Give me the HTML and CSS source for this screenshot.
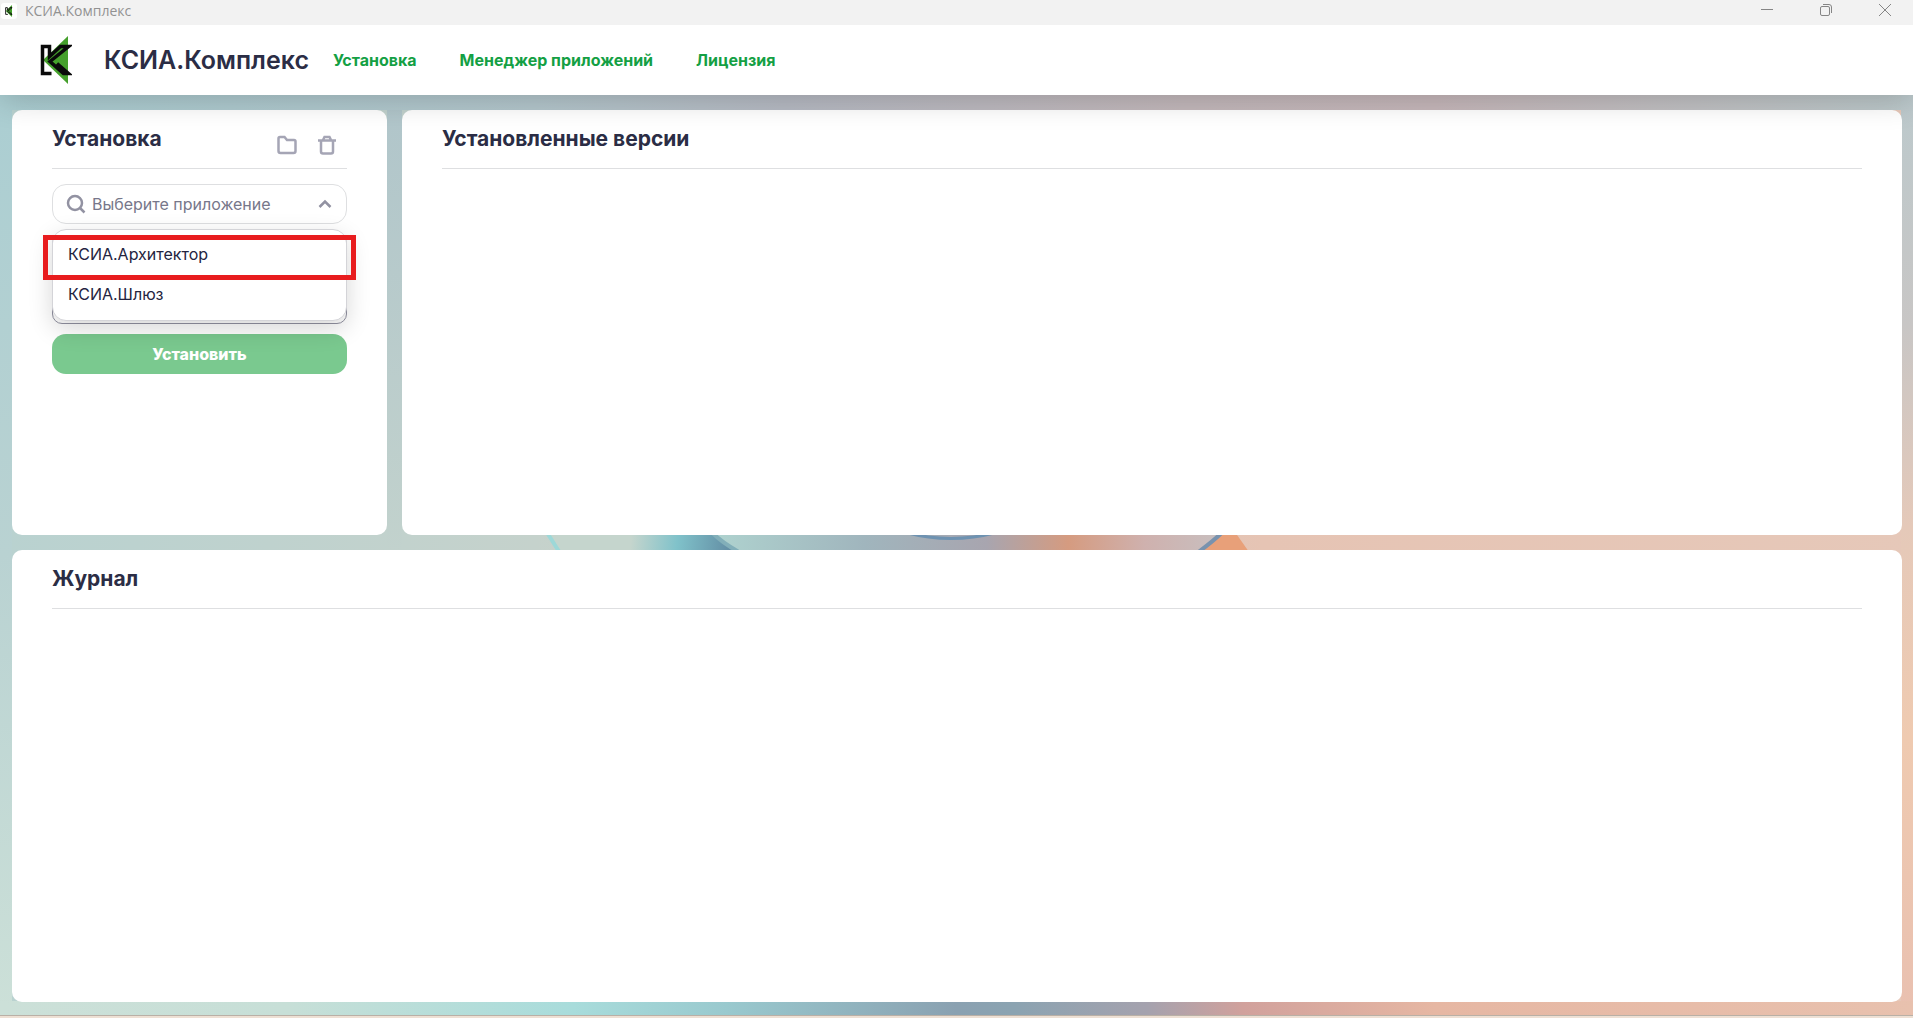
FILE: index.html
```
<!DOCTYPE html>
<html lang="ru">
<head>
    <meta charset="UTF-8">
    <meta name="viewport" content="width=device-width, initial-scale=1.0">
    <title>КСИА.Комплекс</title>
    <link rel="stylesheet" href="styles.css">
</head>
<body>
    <svg width="0" height="0" class="sprite" aria-hidden="true">
        <symbol id="logo" viewBox="0 0 32 48">
            <path d="M28 0v48L3 24z" fill="#45a02c"/>
            <path d="M11.5 37.5h-9v-27h7v10l11-10h8L10 25.5l13.500 12h5L17 27.500" fill="none" stroke="#0a0a0a" stroke-width="3.500"/>
        </symbol>
    </svg>

    <div class="titlebar">
        <span class="app-icon"><svg><use href="#logo"/></svg></span>
        <span class="window-title">КСИА.Комплекс</span>
        <div class="window-buttons">
            <button aria-label="Свернуть"><svg viewBox="0 0 12 12"><path d="M0 5.5h12"/></svg></button>
            <button aria-label="Развернуть"><svg viewBox="0 0 12 12"><rect x=".5" y="2.5" width="9" height="9" rx="1.5"/><path d="M3 .5h6a2.5 2.5 0 0 1 2.5 2.5v6"/></svg></button>
            <button aria-label="Закрыть"><svg viewBox="0 0 12 12"><path d="M0 0l12 12M12 0L0 12"/></svg></button>
        </div>
    </div>

    <header class="header">
        <svg class="logo"><use href="#logo"/></svg>
        <h1>КСИА.Комплекс</h1>
        <nav>
            <a href="#install">Установка</a>
            <a href="#manager">Менеджер приложений</a>
            <a href="#license">Лицензия</a>
        </nav>
    </header>

    <main class="content">
        <svg class="backdrop" viewBox="0 0 1913 921" preserveAspectRatio="none" aria-hidden="true">
            <defs>
                <linearGradient id="wave" gradientUnits="userSpaceOnUse" x1="548" y1="440" x2="732" y2="456">
                    <stop offset="0" stop-color="#c5d5cd"/>
                    <stop offset=".45" stop-color="#c5d5cd"/>
                    <stop offset=".7" stop-color="#80c2ca"/>
                    <stop offset="1" stop-color="#628ca3"/>
                </linearGradient>
                <linearGradient id="disc" gradientUnits="userSpaceOnUse" x1="712" y1="0" x2="1221" y2="0">
                    <stop offset="0" stop-color="#afd3cf"/>
                    <stop offset=".3" stop-color="#a0b5bd"/>
                    <stop offset=".54" stop-color="#a8a5af"/>
                    <stop offset=".7" stop-color="#d59b80"/>
                    <stop offset=".85" stop-color="#cfb1ae"/>
                    <stop offset="1" stop-color="#c8bfbf"/>
                </linearGradient>
            </defs>
            <path d="M547 439h165l26 17H558z" fill="url(#wave)"/>
            <path d="M712 439h509l-20 17H738z" fill="url(#disc)"/>
            <path d="M1221 439h15l12 17h-49z" fill="#e8a079"/>
            <path d="M547 438l12 19" stroke="#9dd8d8" stroke-width="4"/>
            <path d="M712 438q10 10 26 19" stroke="#82afb9" stroke-width="4" fill="none"/>
            <path d="M1223 437q-10 10-24 20" stroke="#7892ae" stroke-width="4" fill="none"/>
            <path d="M906 438q45 12 90 0" stroke="#6e92b1" stroke-width="3" fill="none"/>
        </svg>

        <section class="card" id="install">
            <div class="card-head">
                <h2>Установка</h2>
                <div class="tools">
                    <button aria-label="Открыть папку"><svg viewBox="0 0 20 20"><path d="M1.5 3.500a1.500 1.500 0 0 1 1.500-1.500h4.500l2.500 3h7a1.500 1.500 0 0 1 1.500 1.500v9.500a2 2 0 0 1-2 2h-13a2 2 0 0 1-2-2z"/></svg></button>
                    <button aria-label="Удалить"><svg viewBox="0 0 20 20"><path d="M1 5.500h18M4 5.500v11a2 2 0 0 0 2 2h8a2 2 0 0 0 2-2v-11M6 5l1.500-3h5L14 5"/></svg></button>
                </div>
            </div>
            <form class="install-form">
                <div class="combo">
                    <svg class="search-icon" viewBox="0 0 20 20"><circle cx="9" cy="9" r="7"/><path d="M14 14l4.500 4.500"/></svg>
                    <input type="text" placeholder="Выберите приложение" aria-label="Приложение">
                    <svg class="chevron" viewBox="0 0 14 10"><path d="M1.500 8L7 2.500 12.500 8"/></svg>
                    <div class="dropdown">
                        <button type="button" class="selected">КСИА.Архитектор</button>
                        <button type="button">КСИА.Шлюз</button>
                    </div>
                </div>
                <input class="field" type="text" aria-label="Версия">
                <input class="field" type="text" aria-label="Путь установки">
                <button class="submit" type="button">Установить</button>
            </form>
        </section>

        <section class="card">
            <div class="card-head">
                <h2>Установленные версии</h2>
            </div>
        </section>

        <section class="card journal">
            <div class="card-head">
                <h2>Журнал</h2>
            </div>
        </section>
    </main>
</body>
</html>
```
FILE: styles.css
```
:root {
    --green: #14a044;
    --text: #2b2d45;
    --icon: #a5a5b5;
    --line: #dedfe1;
}

* {
    box-sizing: border-box;
    margin: 0;
    padding: 0;
}

body {
    font-family: Inter, "Noto Sans", sans-serif;
    color: var(--text);
    min-height: 100vh;
    display: flex;
    flex-direction: column;
    background: #eee0d4;
}

button {
    font: inherit;
    border: none;
    background: none;
    cursor: pointer;
}

svg {
    display: block;
}

.sprite {
    position: absolute;
}

/* Window title bar */
.titlebar {
    position: relative;
    z-index: 2;
    height: 25px;
    display: flex;
    align-items: center;
    background: #f2f2f2;
}

.app-icon {
    width: 16px;
    height: 16px;
    margin: 0 8px 4px 1px;
    padding: 2px;
    border-radius: 3px;
    background: #fff;
}

.app-icon svg {
    width: 12px;
    height: 12px;
}

.window-title {
    font-family: "Open Sans", "Noto Sans", sans-serif;
    font-size: 14px;
    line-height: 20px;
    padding-bottom: 3px;
    color: #929292;
}

.window-buttons {
    display: flex;
    margin-left: auto;
    padding: 0 16px 5px 0;
    gap: 35px;
}

.window-buttons button {
    width: 24px;
    padding: 0 6px;
}

.window-buttons svg {
    width: 12px;
    height: 12px;
    fill: none;
    stroke: #858585;
}

/* Header */
.header {
    position: relative;
    z-index: 1;
    height: 70px;
    display: flex;
    align-items: center;
    padding-left: 40px;
    background: #fff;
    box-shadow: 0 4px 32px rgba(0, 0, 0, 0.2);
}

.logo {
    width: 32px;
    height: 48px;
    margin-right: 32px;
}

h1 {
    font-size: 25px;
    font-weight: 600;
    line-height: 32px;
}

nav {
    display: flex;
    gap: 43px;
    margin-left: 24px;
}

nav a {
    color: var(--green);
    font-size: 16px;
    font-weight: 700;
    line-height: 24px;
    text-decoration: none;
}

/* Content */
.content {
    position: relative;
    flex: 1;
    display: grid;
    grid-template-columns: minmax(0, 1fr) minmax(0, 4fr);
    grid-template-rows: 16fr 17fr;
    gap: 15px;
    padding: 15px 11px 13px 12px;
    border-bottom: 1px solid #b9b0a6;
    margin-bottom: 2px;
    background:
        linear-gradient(90deg, #cce0d8 0, #c7dfd7 15%, #a8dcdb 30%, #99c9ce 38%, #8aa1b1 50%, #8ba3b1 53%, #a5a2ae 60%, #d1a19c 65%, #e6b7a3 75%, #e8c1ae 100%) bottom / 100% 14px no-repeat,
        linear-gradient(180deg, #bcc9cc 0, #c8c6c5 25%, #e5c9b9 47%, #efcab0 70%, #e9c0b0 100%) right / 12px 100% no-repeat,
        linear-gradient(180deg, #abced2 0, #b9d2d2 50%, #cce0d8 100%) left / 12px 100% no-repeat,
        linear-gradient(90deg, #abced2 0, #b4c7cd 28%, #b7bbc4 41%, #c4b9bc 62%, #c7b8bb 75%, #bcc9cb 100%) top / 100% 15px no-repeat,
        linear-gradient(180deg, #b0c5ca 0, #c2d2cd 100%) 387px 0 / 15px 50% no-repeat,
        linear-gradient(90deg, #b9d2d0 0, #c5d2cc 28%, #e6c4b4 66%, #e6c8b9 100%);
}

.backdrop {
    position: absolute;
    width: 100%;
    height: 100%;
}

.card {
    position: relative;
    padding: 0 40px;
    border-radius: 10px;
    background: #fff;
}

.journal {
    grid-column: 1 / -1;
}

.card-head {
    height: 59px;
    display: flex;
    justify-content: space-between;
    padding-top: 12px;
    border-bottom: 1px solid var(--line);
}

h2 {
    font-size: 21px;
    font-weight: 700;
    line-height: 34px;
}

.tools {
    display: flex;
    align-items: flex-start;
    gap: 20px;
    padding: 13px 10px 0 0;
}

.tools svg {
    width: 20px;
    height: 20px;
    fill: none;
    stroke: var(--icon);
    stroke-width: 2.5;
}

/* Install form */
.install-form {
    display: flex;
    flex-direction: column;
    gap: 10px;
    padding-top: 15px;
}

.combo {
    position: relative;
    height: 40px;
    display: flex;
    align-items: center;
    gap: 6px;
    padding: 0 14px 0 13px;
    border: 1px solid var(--line);
    border-radius: 14px;
}

.combo input {
    flex: 1;
    min-width: 0;
    border: none;
    outline: none;
    background: none;
    font: 16px/24px Inter, "Noto Sans", sans-serif;
}

.combo input::placeholder {
    color: #77778a;
}

.search-icon,
.chevron {
    width: 20px;
    height: 20px;
    fill: none;
    stroke: #9292a2;
    stroke-width: 2.5;
}

.chevron {
    width: 14px;
}

.dropdown {
    position: absolute;
    z-index: 2;
    top: 44px;
    left: -1px;
    right: -1px;
    padding: 4px 0 6px;
    border: 1px solid #d4d4d8;
    border-radius: 14px;
    background: #fff;
    box-shadow: 0 8px 24px rgba(0, 0, 0, 0.16);
}

.dropdown button {
    position: relative;
    display: block;
    width: 100%;
    height: 40px;
    padding: 0 15px;
    color: #24243f;
    font-size: 16px;
    line-height: 24px;
    text-align: left;
}

/* Highlight frame around the chosen application */
.dropdown .selected::after {
    content: "";
    position: absolute;
    z-index: 1;
    inset: 1px -10px -6px;
    border: 5px solid #e81c1e;
}

.field {
    height: 40px;
    padding: 0 16px;
    border: 1px solid #9292a2;
    border-radius: 10px;
    background: #fff;
}

.submit {
    height: 40px;
    border-radius: 14px;
    background: #7ac98f;
    color: #fff;
    font-size: 16px;
    font-weight: 800;
}
```
